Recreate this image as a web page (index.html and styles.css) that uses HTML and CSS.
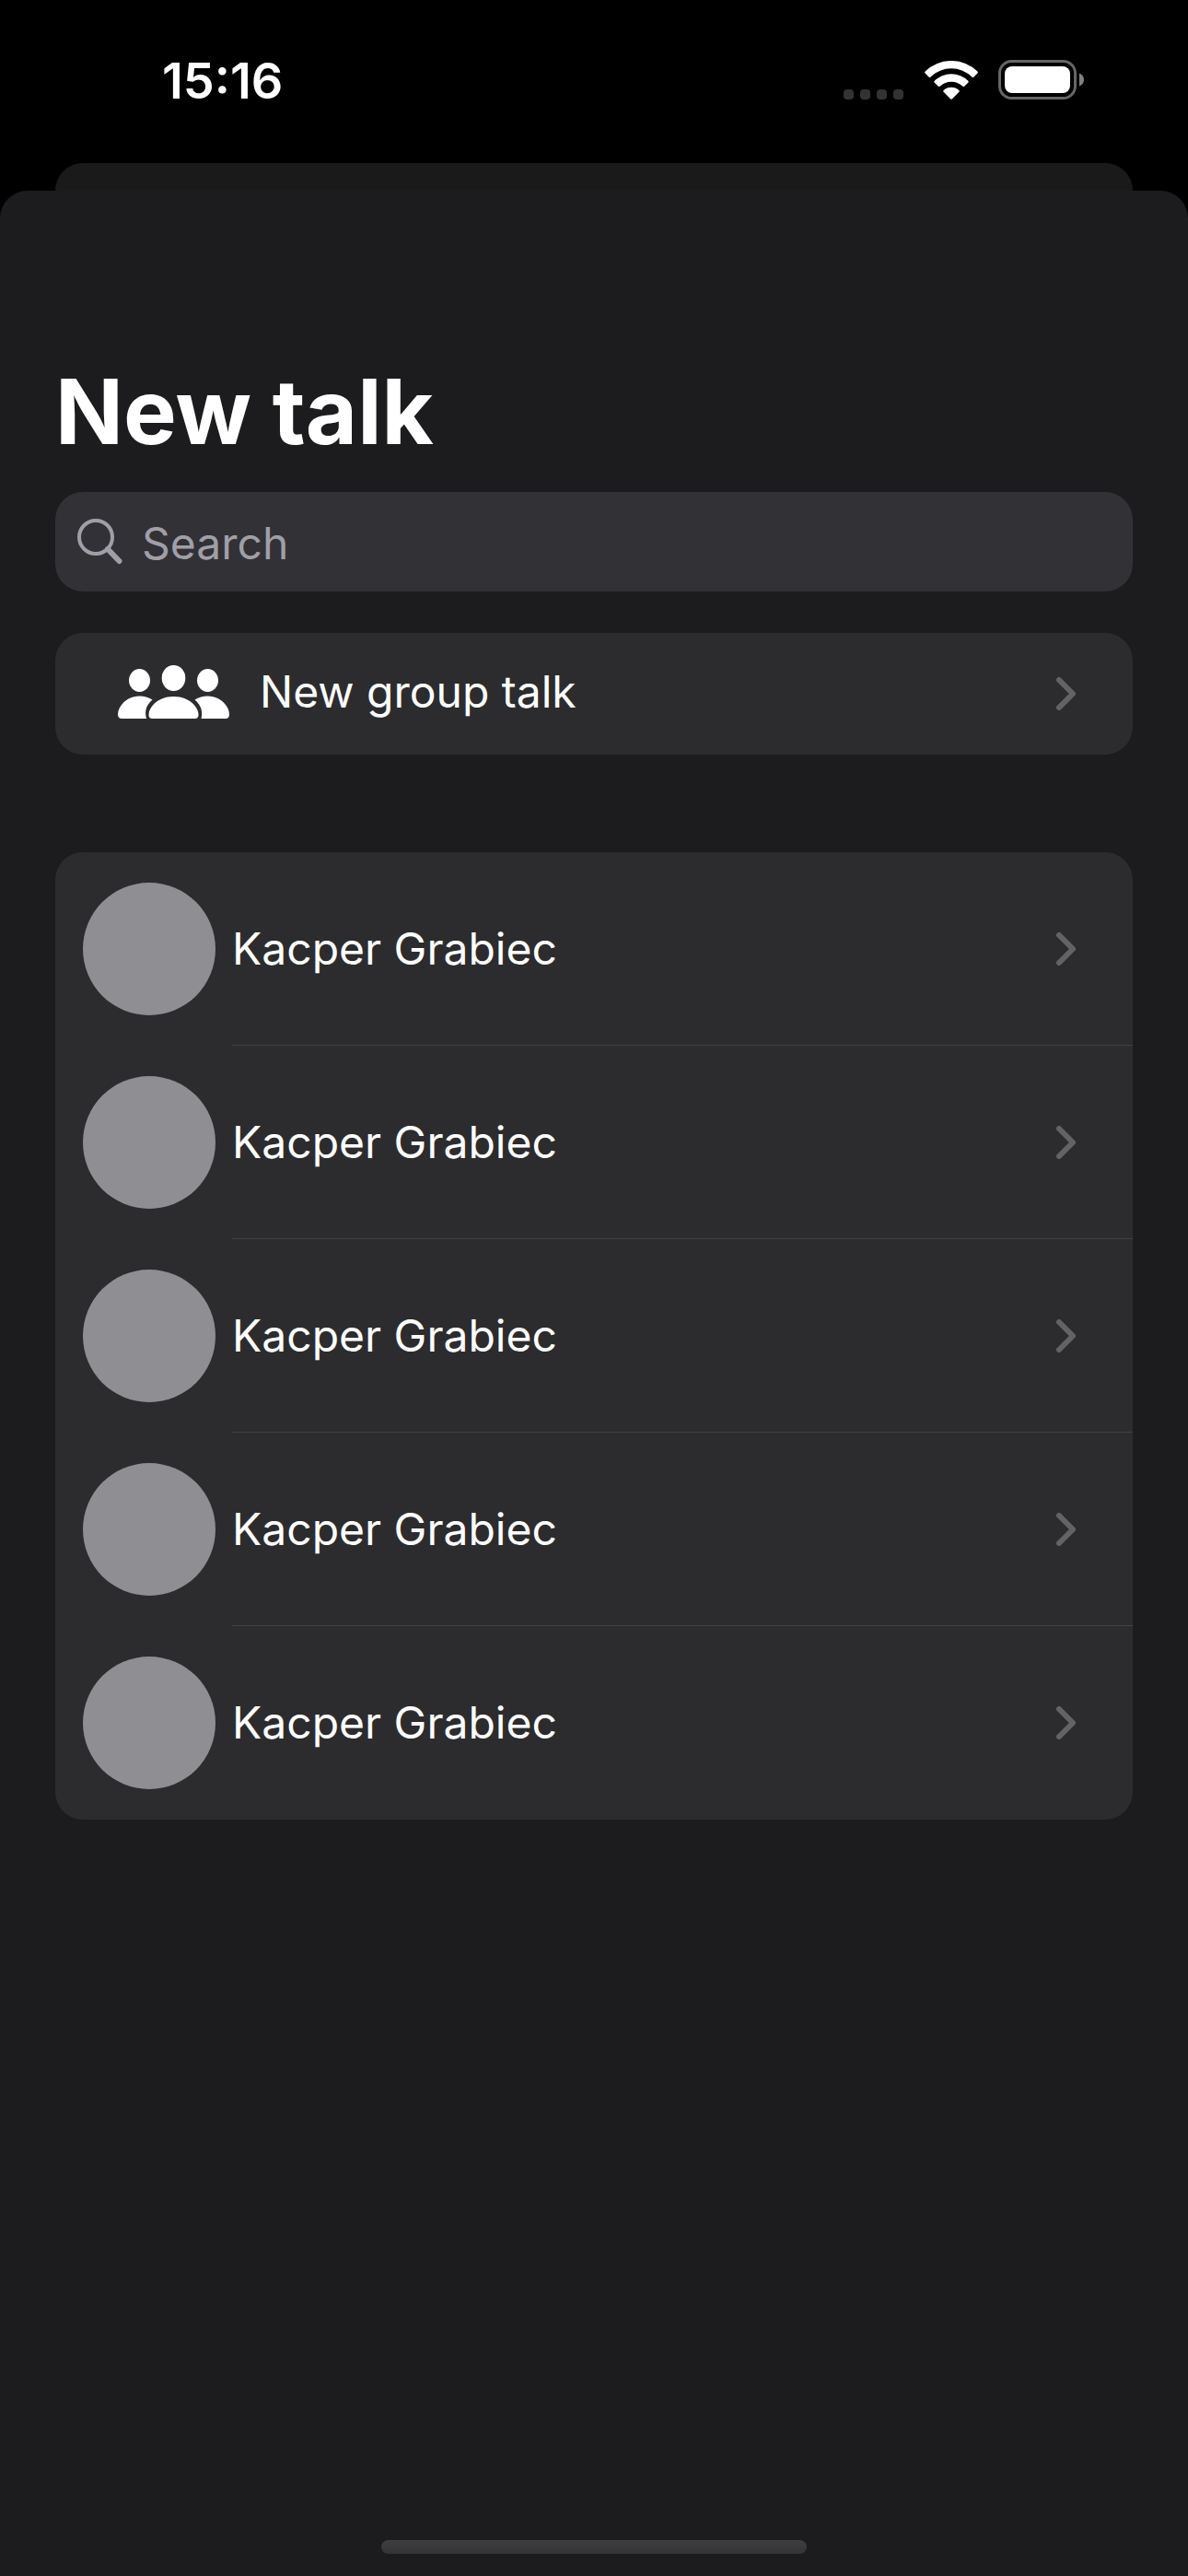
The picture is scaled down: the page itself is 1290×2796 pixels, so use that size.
FILE: index.html
```html
<!DOCTYPE html>
<html lang="en">
<head>
<meta charset="utf-8">
<meta name="viewport" content="width=device-width, initial-scale=1">
<title>New talk</title>
<link rel="stylesheet" href="styles.css">
</head>
<body>
<svg class="symbols" aria-hidden="true">
  <symbol id="chevron" viewBox="0 0 22 36">
    <path d="M3 3 18 18 3 33" fill="none" stroke="currentColor" stroke-width="6" stroke-linecap="round" stroke-linejoin="round"/>
  </symbol>
</svg>
<div class="screen">
  <header class="status">
    <time class="clock">15:16</time>
    <div class="indicators">
      <svg class="cell" viewBox="0 0 65 11" aria-hidden="true">
        <rect width="11" height="11" rx="4"/><rect x="18" width="11" height="11" rx="4"/><rect x="36" width="11" height="11" rx="4"/><rect x="54" width="11" height="11" rx="4"/>
      </svg>
      <svg class="wifi" viewBox="0 0 58 42" aria-hidden="true">
        <path d="M.6 11.400Q-.4 12.600.8 13.800L4.500 17.500Q5.500 18.500 6.600 17.500A32 32 0 0 1 51.400 17.500Q52.500 18.500 53.500 17.500L57.200 13.800Q58.400 12.600 57.400 11.400A41 41 0 0 0 .6 11.400Z"/>
        <path d="M10.800 21.700Q9.800 22.800 10.800 23.800L14.600 27.600Q15.600 28.600 16.800 27.600A18 18 0 0 1 41.200 27.600Q42.400 28.600 43.400 27.600L47.200 23.800Q48.200 22.800 47.200 21.700A26 26 0 0 0 10.800 21.700Z"/>
        <path d="M20.700 31.900Q19.700 33.100 20.800 34.100L28 41.300Q29 42.300 30 41.300L37.200 34.100Q38.300 33.100 37.300 31.900A12.500 12.500 0 0 0 20.700 31.900Z"/>
      </svg>
      <svg class="battery" viewBox="0 0 94 43" aria-hidden="true">
        <rect x="1.500" y="1.500" width="82" height="40" rx="13" fill="none" stroke="#666" stroke-width="3"/>
        <rect x="7" y="7" width="71" height="29" rx="8" fill="#fff"/>
        <path d="M88 14.500Q93 16.500 93 21.500T88 28.500Z" fill="#808080"/>
      </svg>
    </div>
  </header>
  <div class="backdrop"></div>
  <main class="sheet">
    <h1 class="title">New talk</h1>
    <label class="search">
      <svg class="search-icon" viewBox="0 0 50 50" role="img" aria-label="Search">
        <circle cx="20" cy="20" r="18" fill="none" stroke="currentColor" stroke-width="4"/>
        <path d="M33 33 45.500 46" fill="none" stroke="currentColor" stroke-width="6" stroke-linecap="round"/>
      </svg>
      <input class="search-input" type="search" placeholder="Search">
    </label>
    <a class="card group" href="#group">
      <span class="group-lead">
        <svg class="group-icon" viewBox="0 0 122 58" aria-hidden="true">
          <ellipse cx="60.500" cy="14" rx="12.800" ry="14"/>
          <ellipse cx="23.500" cy="16.500" rx="11.500" ry="12.500"/>
          <ellipse cx="97.500" cy="16.500" rx="11.500" ry="12.500"/>
          <path d="M60.500 34C44 34 33.500 45 33.500 54Q33.500 58 37.500 58H83.500Q87.500 58 87.500 54C87.500 45 77 34 60.500 34Z"/>
          <path d="M37.500 37.500C33 34.800 28.500 33.500 23.500 33.500C9 33.500 0 45 0 53.500Q0 58 4.500 58H31Q27.500 46 37.500 37.500Z"/>
          <path d="M83.500 37.500C88 34.800 92.500 33.500 97.500 33.500C112 33.500 121 45 121 53.500Q121 58 116.500 58H90.500Q93.500 46 83.500 37.500Z"/>
        </svg>
        <span>New group talk</span>
      </span>
      <svg class="chevron" aria-hidden="true"><use href="#chevron"/></svg>
    </a>
    <ul class="card contacts">
      <li><a class="contact" href="#1"><span class="avatar"></span><span>Kacper Grabiec</span><svg class="chevron" aria-hidden="true"><use href="#chevron"/></svg></a></li>
      <li><a class="contact" href="#2"><span class="avatar"></span><span>Kacper Grabiec</span><svg class="chevron" aria-hidden="true"><use href="#chevron"/></svg></a></li>
      <li><a class="contact" href="#3"><span class="avatar"></span><span>Kacper Grabiec</span><svg class="chevron" aria-hidden="true"><use href="#chevron"/></svg></a></li>
      <li><a class="contact" href="#4"><span class="avatar"></span><span>Kacper Grabiec</span><svg class="chevron" aria-hidden="true"><use href="#chevron"/></svg></a></li>
      <li><a class="contact" href="#5"><span class="avatar"></span><span>Kacper Grabiec</span><svg class="chevron" aria-hidden="true"><use href="#chevron"/></svg></a></li>
    </ul>
    <div class="home-bar"></div>
  </main>
</div>
</body>
</html>
```
FILE: styles.css
```css
* {
  box-sizing: border-box;
}

body {
  margin: 0;
  background: #000;
  color: #fff;
  font-family: Inter, "Liberation Sans", sans-serif;
  font-size: 48px;
  line-height: 60px;
}

a {
  color: inherit;
  text-decoration: none;
}

svg {
  display: block;
  flex: none;
}

.symbols {
  position: absolute;
  width: 0;
  height: 0;
}

.screen {
  display: flex;
  flex-direction: column;
  min-height: 100vh;
}

.status {
  display: flex;
  align-items: flex-start;
  justify-content: space-between;
  height: 177px;
  padding: 58px 112px 0 176px;
}

.clock {
  font-size: 54px;
  font-weight: 600;
}

.indicators {
  display: flex;
  align-items: flex-end;
  padding-top: 7px;
}

.cell {
  width: 65px;
  height: 11px;
  margin-right: 23px;
  fill: #333;
}

.wifi {
  width: 58px;
  height: 42px;
  margin-right: 22px;
  fill: #fff;
}

.battery {
  width: 94px;
  height: 43px;
}

.backdrop {
  height: 30px;
  margin: 0 60px;
  border-radius: 30px 30px 0 0;
  background: #1a1a1a;
}

.sheet {
  flex: 1;
  display: flex;
  flex-direction: column;
  padding: 180px 60px 24px;
  border-radius: 30px 30px 0 0;
  background: #1c1c1e;
}

.title {
  margin: 0 0 27px;
  font-size: 97px;
  font-weight: 700;
  line-height: 120px;
}

.search {
  display: flex;
  align-items: center;
  gap: 20px;
  height: 108px;
  padding: 0 24px;
  border-radius: 30px;
  background: #323136;
  color: #a09fa7;
}

.search-icon {
  width: 50px;
  height: 50px;
}

.search-input {
  flex: 1;
  min-width: 0;
  padding: 4px 0 0;
  border: 0;
  outline: 0;
  background: none;
  color: #fff;
  font: inherit;
}

.search-input::placeholder {
  color: #a09fa7;
  opacity: 1;
}

.card {
  border-radius: 30px;
  background: #2c2c2e;
}

.group {
  display: flex;
  align-items: center;
  justify-content: space-between;
  height: 132px;
  margin-top: 45px;
  padding: 0 61px 0 68px;
}

.group-lead {
  display: flex;
  align-items: center;
  gap: 32px;
  padding-bottom: 4px;
}

.group-icon {
  width: 122px;
  height: 58px;
  fill: #fff;
}

.chevron {
  width: 22px;
  height: 36px;
  color: #636363;
}

.contacts {
  margin: 106px 0 0;
  padding: 0;
  list-style: none;
}

.contact {
  display: grid;
  grid-template-columns: 144px 1fr 22px;
  align-items: center;
  height: 210px;
  padding: 0 61px 0 30px;
  column-gap: 18px;
}

.contacts li:not(:last-child) {
  background: linear-gradient(#414144, #414144) 192px 100% / 100% 1px no-repeat;
}

.avatar {
  width: 144px;
  height: 144px;
  border-radius: 50%;
  background: #8e8e93;
}

.home-bar {
  width: 462px;
  max-width: 40%;
  height: 15px;
  margin: auto auto 0;
  border-radius: 8px;
  background: linear-gradient(#3e3e3e, #343434);
}
```
